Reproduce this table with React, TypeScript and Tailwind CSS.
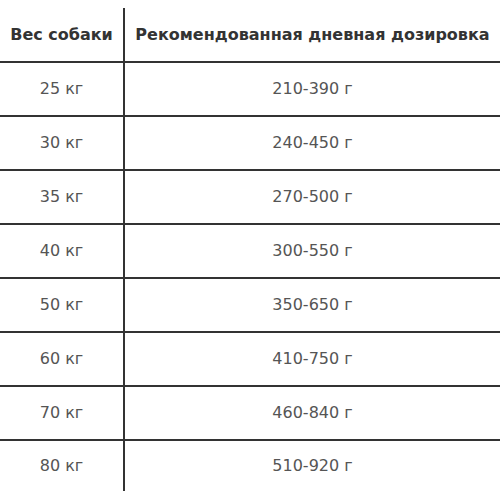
const ROWS = [
  ["25 кг", "210-390 г"],
  ["30 кг", "240-450 г"],
  ["35 кг", "270-500 г"],
  ["40 кг", "300-550 г"],
  ["50 кг", "350-650 г"],
  ["60 кг", "410-750 г"],
  ["70 кг", "460-840 г"],
  ["80 кг", "510-920 г"],
];

const App = () => {
  return (
    <div className="w-[500px] h-[500px] bg-white pt-2 overflow-hidden" style={{ fontFamily: '"DejaVu Sans", "Liberation Sans", sans-serif' }}>
      <table className="w-full border-collapse table-fixed">
        <colgroup>
          <col className="w-[124px]" />
          <col />
        </colgroup>
        <thead>
          <tr className="h-[54px]">
            <th className="border-r-2 border-[#333] text-[16px] font-bold text-[#333] text-center align-middle">Вес собаки</th>
            <th className="text-[16px] font-bold text-[#333] text-center align-middle whitespace-nowrap">
              Рекомендованная дневная дозировка
            </th>
          </tr>
        </thead>
        <tbody>
          {ROWS.map(([w, d], i) => (
            <tr key={w} className={`border-t-2 border-[#333] ${i === ROWS.length - 1 ? "h-[51px]" : "h-[54px]"}`}>
              <td className="border-r-2 border-[#333] text-[16px] text-[#555] text-center align-middle">{w}</td>
              <td className="text-[16px] text-[#555] text-center align-middle">{d}</td>
            </tr>
          ))}
        </tbody>
      </table>
    </div>
  );
};

export default App;
